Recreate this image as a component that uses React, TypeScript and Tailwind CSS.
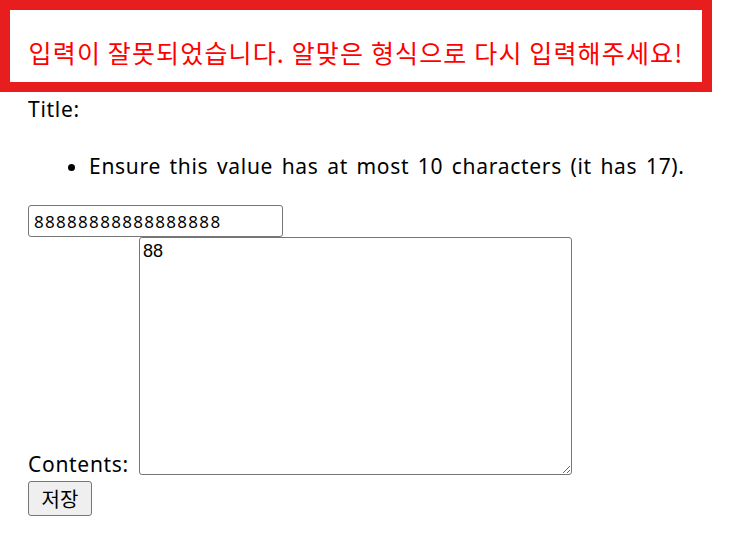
export default function App() {
  return (
    <div className="min-h-[535px] bg-white font-['Noto_Sans','Noto_Sans_CJK_KR',sans-serif] text-[20px] leading-[25px] text-black">
      <div className="flex h-[92px] w-[712px] items-center justify-center border-[10px] border-[#e81e1e] pt-[12px] font-['Noto_Sans_CJK_KR',sans-serif] text-[25px] tracking-[1.15px] text-[#ff0000]">
        입력이 잘못되었습니다. 알맞은 형식으로 다시 입력해주세요!
      </div>
      <div className="pl-[28px] text-[21px] tracking-[0.7px] [word-spacing:2.4px]">
        <div className="pt-[5px]">Title:</div>
        <ul className="mt-[32px] mb-[26px] list-disc pl-[61px]">
          <li>Ensure this value has at most 10 characters (it has 17).</li>
        </ul>
        <input
          type="text"
          defaultValue="88888888888888888"
          className="block h-[32px] w-[255px] rounded-[3px] border border-[#767676] px-[5px] text-[17px] tracking-[1.3px]"
        />
        <div className="flex items-end">
          <span className="w-[111px] shrink-0 leading-[1]">Contents:</span>
          <textarea
            defaultValue="88"
            className="h-[238px] w-[433px] rounded-[3px] border border-[#767676] px-[3px] py-[3px] font-['Liberation_Sans',sans-serif] text-[18px] leading-[1.2] tracking-normal"
          />
        </div>
        <button className="mt-[6px] h-[35px] w-[64px] rounded-[3px] border border-[#767676] bg-[#efefef] font-['Noto_Sans_CJK_KR',sans-serif] text-[20px] tracking-normal">
          저장
        </button>
      </div>
    </div>
  );
}
